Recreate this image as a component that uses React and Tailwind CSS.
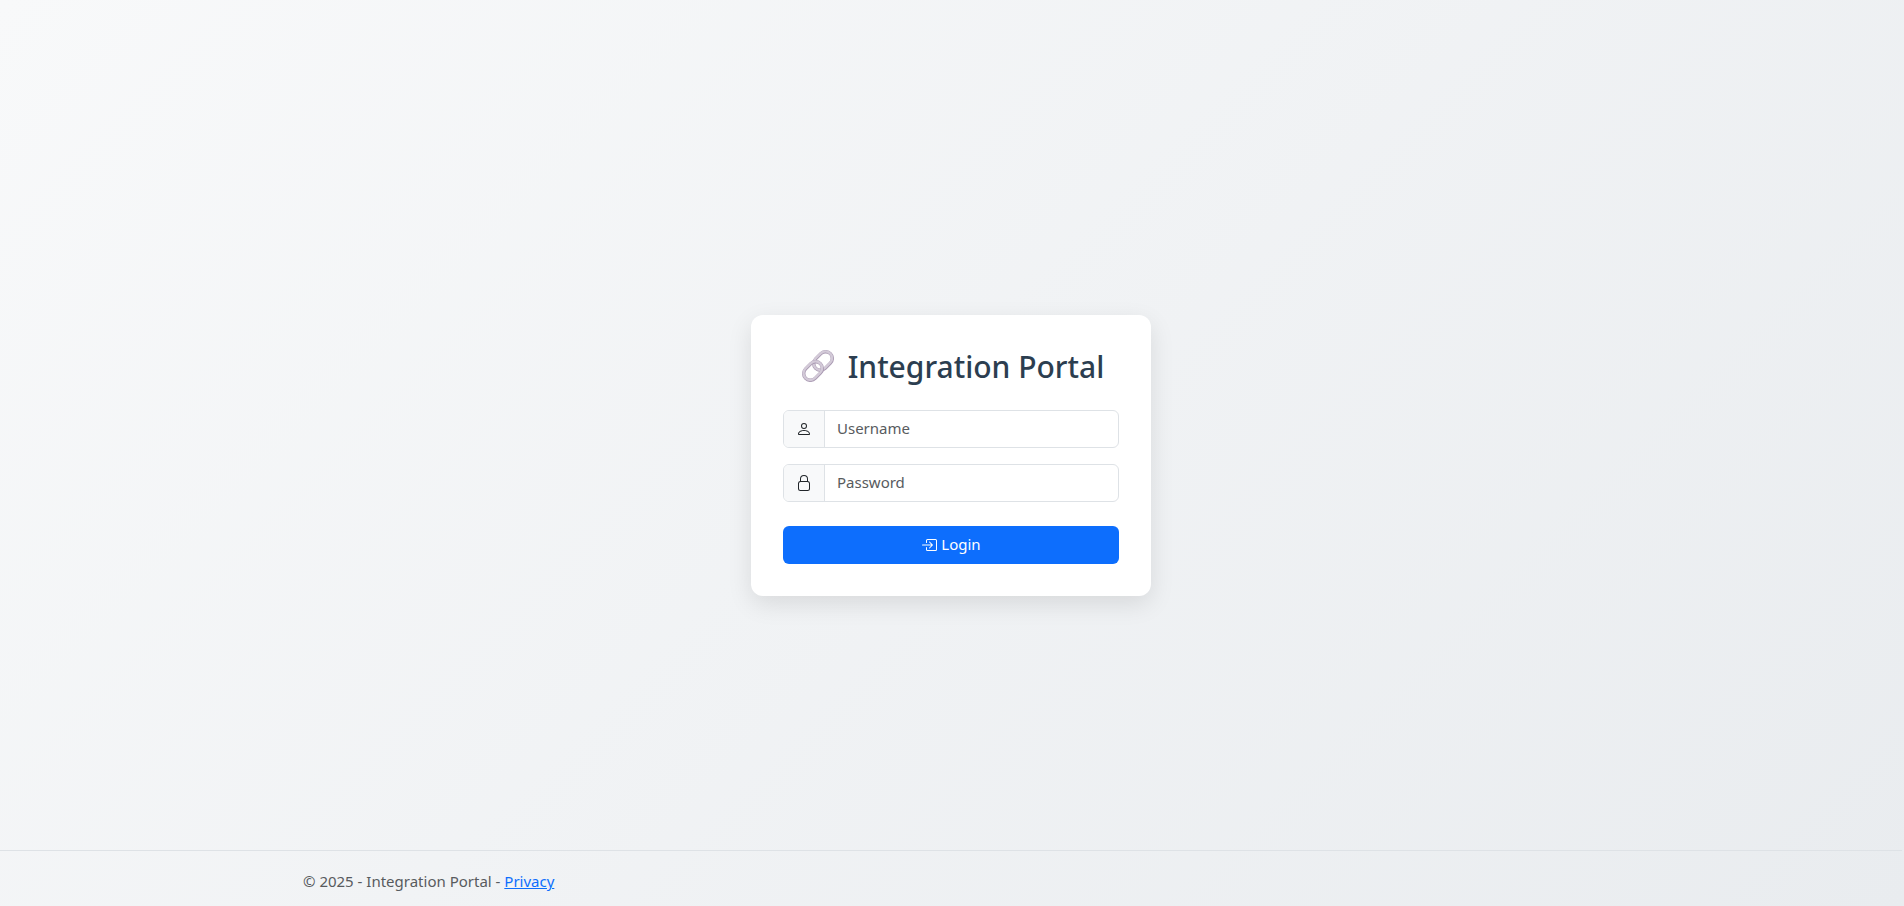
import { BsBoxArrowInRight, BsPerson } from "react-icons/bs";

function LinkIcon() {
  return (
    <svg viewBox="0 0 32 32" className="size-8 shrink-0" fill="none" aria-hidden="true">
      <rect x="10.6" y="4.3" width="20.8" height="13.4" rx="6.7" transform="rotate(-45 21 11)" stroke="#a898b1" strokeWidth="3.4" />
      <rect x="10.6" y="4.3" width="20.8" height="13.4" rx="6.7" transform="rotate(-45 21 11) translate(0.1 -0.4)" stroke="#d3cad8" strokeWidth="2.4" />
      <rect x="0.6" y="14.3" width="20.8" height="13.4" rx="6.7" transform="rotate(-45 11 21)" stroke="#a898b1" strokeWidth="3.4" />
      <rect x="0.6" y="14.3" width="20.8" height="13.4" rx="6.7" transform="rotate(-45 11 21) translate(0.1 -0.4)" stroke="#d3cad8" strokeWidth="2.4" />
    </svg>
  );
}

function LockIcon() {
  return (
    <svg viewBox="0 0 16 16" className="size-4" fill="currentColor" aria-hidden="true">
      <path
        fillRule="evenodd"
        d="M8 0a4 4 0 0 1 4 4v2.05a2.5 2.5 0 0 1 2 2.45v5a2.5 2.5 0 0 1-2.5 2.5h-7A2.5 2.5 0 0 1 2 13.5v-5a2.5 2.5 0 0 1 2-2.45V4a4 4 0 0 1 4-4M4.5 7A1.5 1.5 0 0 0 3 8.5v5A1.5 1.5 0 0 0 4.5 15h7a1.5 1.5 0 0 0 1.5-1.5v-5A1.5 1.5 0 0 0 11.5 7zM8 1a3 3 0 0 0-3 3v2h6V4a3 3 0 0 0-3-3"
      />
    </svg>
  );
}

function Field({ id, label, type, icon }) {
  return (
    <div className="flex h-[38px] overflow-hidden rounded-md border border-[#dee2e6] bg-white">
      <label htmlFor={id} aria-label={label} className="flex w-[41px] shrink-0 items-center justify-center border-r border-[#dee2e6] bg-[#f8f9fa] text-[#212529]">
        {icon}
      </label>
      <input
        id={id}
        type={type}
        placeholder={label}
        className="min-w-0 flex-1 px-3 text-[15px] text-[#212529] outline-none placeholder:text-[#585b5e]"
      />
    </div>
  );
}

export default function App() {
  return (
    <div className="flex min-h-screen flex-col bg-linear-[135deg,#f8f9fa,#e9ecef] pr-0.5 font-['Noto_Sans','Open_Sans',sans-serif] text-[#212529]">
      <main className="flex flex-1 items-center justify-center px-4 pt-[60px]">
        <form className="w-full max-w-[400px] rounded-xl bg-white p-8 shadow-[0_8px_24px_rgba(0,0,0,0.1)]" onSubmit={(e) => e.preventDefault()}>
          <h1 className="mb-6 flex items-center justify-center gap-3.5 pl-1 text-[30px] leading-[39px] font-medium text-[#2c3e50]">
            <LinkIcon />
            <span className="whitespace-nowrap">Integration Portal</span>
          </h1>
          <div className="mb-6 flex flex-col gap-4">
            <Field id="username" label="Username" type="text" icon={<BsPerson className="size-4" />} />
            <Field id="password" label="Password" type="password" icon={<LockIcon />} />
          </div>
          <button type="submit" className="flex h-[38px] w-full items-center justify-center gap-1 rounded-md bg-[#0d6efd] text-[15px] text-white">
            <BsBoxArrowInRight className="size-4" />
            Login
          </button>
        </form>
      </main>
      <footer className="border-t border-[#dee2e6] text-[15px] text-[#585b5e]">
        <div className="mx-auto max-w-[1320px] px-3 pt-[18px] pb-[13px] leading-6">
          © 2025 - Integration Portal -{" "}
          <a href="#privacy" className="text-[#0d6efd] underline">
            Privacy
          </a>
        </div>
      </footer>
    </div>
  );
}
